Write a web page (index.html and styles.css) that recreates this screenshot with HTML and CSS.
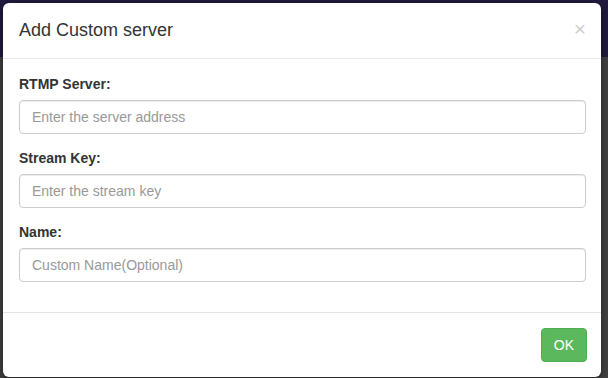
FILE: index.html
```html
<!DOCTYPE html>
<html lang="en">
<head>
    <meta charset="UTF-8">
    <meta name="viewport" content="width=device-width, initial-scale=1.0">
    <title>Add Custom server</title>
    <link rel="stylesheet" href="styles.css">
</head>
<body>
    <div class="topbar"></div>
    <div class="page"></div>
    <div class="modal">
        <div class="modal-content">
            <div class="modal-header">
                <button class="close" type="button">&times;</button>
                <h4 class="modal-title">Add Custom server</h4>
            </div>
            <div class="modal-body">
                <div class="form-group">
                    <label for="rtmp-server">RTMP Server:</label>
                    <input id="rtmp-server" class="form-control" type="text" placeholder="Enter the server address">
                </div>
                <div class="form-group">
                    <label for="stream-key">Stream Key:</label>
                    <input id="stream-key" class="form-control" type="text" placeholder="Enter the stream key">
                </div>
                <div class="form-group">
                    <label for="custom-name">Name:</label>
                    <input id="custom-name" class="form-control" type="text" placeholder="Custom Name(Optional)">
                </div>
            </div>
            <div class="modal-footer">
                <button class="btn btn-success" type="button">OK</button>
            </div>
        </div>
    </div>
</body>
</html>
```
FILE: styles.css
```css
* {
    box-sizing: border-box;
}
html, body {
    height: 100%;
}
body {
    margin: 0;
    font-family: "Liberation Sans", Arial, sans-serif;
    font-size: 14px;
    line-height: 1.42857;
    color: #333;
    background: #414141;
    position: relative;
    overflow: hidden;
}
.topbar {
    height: 57px;
    background: #211a3d;
}
.modal {
    position: absolute;
    top: 3px;
    left: 3px;
    width: 598px;
}
.modal-content {
    background: #fff;
    border-radius: 6px;
    box-shadow: 0 3px 9px rgba(0, 0, 0, 0.5);
}
.modal-header {
    padding: 15px 15px 14px 16px;
    border-bottom: 1px solid #e5e5e5;
}
.modal-title {
    margin: 0;
    font-size: 18px;
    font-weight: normal;
    line-height: 1.42857;
}
.close {
    float: right;
    margin-top: 0;
    padding: 0;
    border: 0;
    background: transparent;
    font-family: "Liberation Sans", Arial, sans-serif;
    font-size: 21px;
    font-weight: normal;
    line-height: 1;
    color: #000;
    opacity: 0.2;
    text-shadow: 0 1px 0 #fff;
    cursor: pointer;
}
.modal-body {
    padding: 16px 15px 15px 16px;
}
.form-group {
    margin-bottom: 15px;
}
.form-group label {
    display: block;
    margin-bottom: 5px;
    font-weight: bold;
}
.form-control {
    display: block;
    width: 100%;
    height: 34px;
    padding: 6px 12px;
    font-family: "Liberation Sans", Arial, sans-serif;
    font-size: 14px;
    color: #555;
    background: #fff;
    border: 1px solid #ccc;
    border-radius: 4px;
    box-shadow: inset 0 1px 1px rgba(0, 0, 0, 0.075);
}
.form-control::placeholder {
    color: #999;
}
.modal-footer {
    padding: 15px 14px 15px 15px;
    text-align: right;
    border-top: 1px solid #e5e5e5;
}
.btn {
    height: 34px;
    padding: 6px 12px;
    font-family: "Liberation Sans", Arial, sans-serif;
    font-size: 14px;
    border: 1px solid transparent;
    border-radius: 4px;
    cursor: pointer;
}
.btn-success {
    color: #fff;
    background: #5cb85c;
    border-color: #4cae4c;
}
```
